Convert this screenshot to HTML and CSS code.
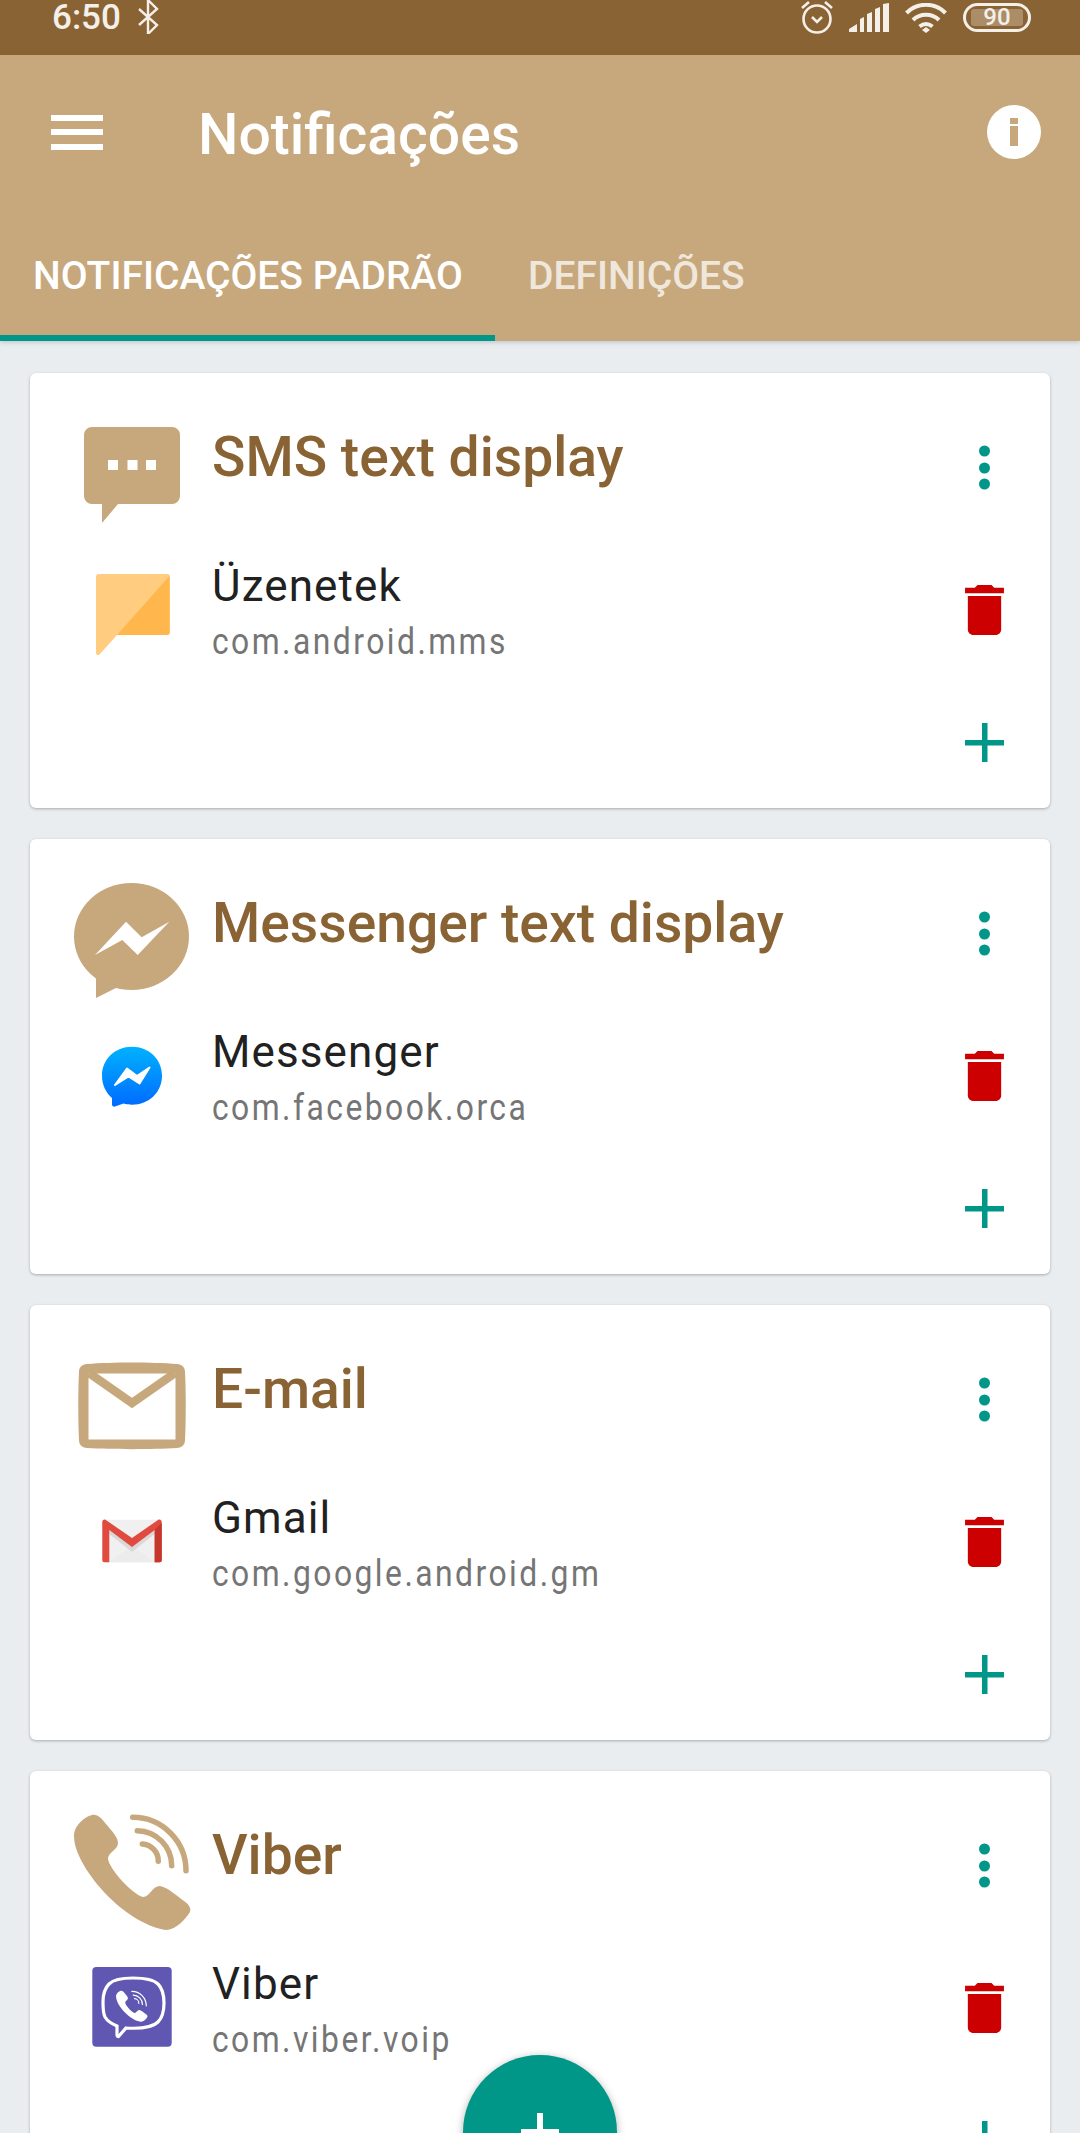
FILE: index.html
```html
<!DOCTYPE html>
<html lang="pt">
<head>
<meta charset="utf-8">
<title>Notificações</title>
<link rel="stylesheet" href="styles.css">
</head>
<body>
<div class="page">
  <header class="appbar">
    <div class="status">
      <div class="status-left">
        <span class="clock">6:50</span>
        <svg class="bt" viewBox="0 0 22 34"><path d="M2 9l18 16-9 9V0l9 9L2 25" fill="none" stroke="#f4efe8" stroke-width="2.4"/></svg>
      </div>
      <div class="status-right">
        <svg class="st-alarm" viewBox="0 0 34 34"><circle cx="17" cy="19" r="13.5" fill="none" stroke="#f4efe8" stroke-width="2.6"/><path d="M12 17l5 5 5-5" fill="none" stroke="#f4efe8" stroke-width="2.6"/><path d="M2 8L9 2M32 8L25 2" stroke="#f4efe8" stroke-width="2.6"/></svg>
        <svg class="st-signal" viewBox="0 0 40 29" fill="#f4efe8"><path d="M0 29v-3l8-5v8zM11 29V16l4-2v15zM18 29V11l5-2v20zM26 29V6l5-2v25zM34 29V1l6-1v29z"/></svg>
        <svg class="st-wifi" viewBox="0 0 42 30" fill="none" stroke="#f4efe8" stroke-width="4"><path d="M1.500 10C12-1 30-1 40.500 10M8 17c7-7 19-7 26 0M14.500 23.500c4-3 9-3 13 0"/><path d="M17 27l4-3 4 3-4 3z" fill="#f4efe8" stroke="none"/></svg>
        <div class="battery"><span class="battery-fill">90</span></div>
      </div>
    </div>
    <div class="toolbar">
      <div class="burger"><i></i><i></i><i></i></div>
      <h1 class="title">Notificações</h1>
      <svg class="info" viewBox="0 0 54 54"><circle cx="27" cy="27" r="27" fill="#fff"/><rect x="23" y="13" width="8" height="6" fill="#c7a87d"/><rect x="23" y="21" width="8" height="20" fill="#c7a87d"/></svg>
    </div>
    <nav class="tabs">
      <div class="tab tab-active">NOTIFICAÇÕES PADRÃO</div>
      <div class="tab tab-idle">DEFINIÇÕES</div>
    </nav>
  </header>

  <main class="list">
    <section class="card">
      <div class="row-head">
        <svg class="icon-big" viewBox="0 0 120 120"><path d="M20 13h80a8 8 0 0 1 8 8v61a8 8 0 0 1-8 8H46l-16 19V90H20a8 8 0 0 1-8-8V21a8 8 0 0 1 8-8z" fill="#c7a87d"/><path d="M36 46h10v10H36zM55.500 46h10v10h-10zM74 46h10v10H74z" fill="#fff"/></svg>
        <h2 class="card-title">SMS text display</h2>
        <svg class="kebab" viewBox="0 0 39 50" fill="#009688"><circle cx="19.500" cy="8" r="5.500"/><circle cx="19.500" cy="25" r="5.500"/><circle cx="19.500" cy="41" r="5.500"/></svg>
      </div>
      <div class="row-app">
        <div class="app-slot"><svg class="icon-app" viewBox="0 0 100 100"><path d="M17 14h68a3 3 0 0 1 3 3v55a3 3 0 0 1-3 3H35L17 95h-1a2 2 0 0 1-2-2V17a3 3 0 0 1 3-3z" fill="#ffcc80"/><path d="M87.500 16v56a3 3 0 0 1-3 3H35z" fill="#ffb74d"/></svg></div>
        <div class="app-text"><div class="app-name">Üzenetek</div><div class="app-pkg">com.android.mms</div></div>
        <svg class="trash" viewBox="5 3 14 18"><path d="M6 19c0 1.100.9 2 2 2h8c1.100 0 2-.9 2-2V7H6v12zM19 4h-3.500l-1-1h-5l-1 1H5v2h14V4z" fill="#cc0000"/></svg>
      </div>
      <div class="row-add"><svg class="plus" viewBox="0 0 39 39" fill="#009688"><path d="M17 0h5.500v39H17zM0 17h39v5.500H0z"/></svg></div>
    </section>

    <section class="card">
      <div class="row-head">
        <svg class="icon-big" viewBox="0 0 120 120"><ellipse cx="59.500" cy="56.500" rx="57.500" ry="53.500" fill="#c7a87d"/><path d="M24 90v28l22-11z" fill="#c7a87d"/><path d="M23 75L54 41.700 69.700 57.300 97.300 41.700 65.700 75 50.300 60z" fill="#fff"/></svg>
        <h2 class="card-title">Messenger text display</h2>
        <svg class="kebab" viewBox="0 0 39 50" fill="#009688"><circle cx="19.500" cy="8" r="5.500"/><circle cx="19.500" cy="25" r="5.500"/><circle cx="19.500" cy="41" r="5.500"/></svg>
      </div>
      <div class="row-app">
        <div class="app-slot"><svg class="icon-app" viewBox="0 0 100 100"><defs><linearGradient id="mg" x1="0" y1="0" x2="0" y2="1"><stop offset="0" stop-color="#00b2ff"/><stop offset="1" stop-color="#006aff"/></linearGradient></defs><path d="M50 20.700c17 0 30 12.600 30 29 0 16.400-13 29-30 29-3 0-6-.4-8.500-1.200L33 80.500c-1.500.5-3-.5-3-2V72C24 66.700 20 59 20 49.700c0-16.400 13-29 30-29z" fill="url(#mg)"/><path d="M33 59L45 42.500 55 50 67.500 41.500 57.500 57.500 46.500 50.500z" fill="#fff" stroke="#fff" stroke-width="2" stroke-linejoin="round"/></svg></div>
        <div class="app-text"><div class="app-name">Messenger</div><div class="app-pkg">com.facebook.orca</div></div>
        <svg class="trash" viewBox="5 3 14 18"><path d="M6 19c0 1.100.9 2 2 2h8c1.100 0 2-.9 2-2V7H6v12zM19 4h-3.500l-1-1h-5l-1 1H5v2h14V4z" fill="#cc0000"/></svg>
      </div>
      <div class="row-add"><svg class="plus" viewBox="0 0 39 39" fill="#009688"><path d="M17 0h5.500v39H17zM0 17h39v5.500H0z"/></svg></div>
    </section>

    <section class="card">
      <div class="row-head">
        <svg class="icon-big" viewBox="0 0 120 120"><path fill-rule="evenodd" d="M15 18C40 16 80 16 105 18c5 .4 8 3 8 8 1 20 1 48 0 68 0 5-3 7.600-8 8-25 1.500-65 1.500-90 0-5-.4-8-3-8-8C6 74 6 46 7 26c0-5 3-7.600 8-8zM16.500 27.500v66h87v-66z" fill="#c7a87d"/><path d="M17 27l43 30 43-30" fill="none" stroke="#c7a87d" stroke-width="8.500"/></svg>
        <h2 class="card-title">E-mail</h2>
        <svg class="kebab" viewBox="0 0 39 50" fill="#009688"><circle cx="19.500" cy="8" r="5.500"/><circle cx="19.500" cy="25" r="5.500"/><circle cx="19.500" cy="41" r="5.500"/></svg>
      </div>
      <div class="row-app">
        <div class="app-slot"><svg class="icon-app" viewBox="0 0 100 100"><path d="M22 27.700h56a2 2 0 0 1 2 2v38.600a2 2 0 0 1-2 2H22a2 2 0 0 1-2-2V29.700a2 2 0 0 1 2-2z" fill="#f0f0f0"/><path d="M27.300 70.300L50 54 72.700 70.300z" fill="#ececec"/><path d="M27.300 37L50 54l22.700-17v5L50 60 27.300 42z" fill="#d9d9d9"/><path d="M20.300 68.300V30c0-2 2-3 3.500-2L50 46 76 28c1.500-1 3.700 0 3.700 2v38.300a2 2 0 0 1-2 2h-5V38L50 55 27.300 38v32.300h-5a2 2 0 0 1-2-2z" fill="#e04a3f"/><path d="M72.700 38l7-7v37.300a2 2 0 0 1-2 2h-5z" fill="#c5372c"/></svg></div>
        <div class="app-text"><div class="app-name">Gmail</div><div class="app-pkg">com.google.android.gm</div></div>
        <svg class="trash" viewBox="5 3 14 18"><path d="M6 19c0 1.100.9 2 2 2h8c1.100 0 2-.9 2-2V7H6v12zM19 4h-3.500l-1-1h-5l-1 1H5v2h14V4z" fill="#cc0000"/></svg>
      </div>
      <div class="row-add"><svg class="plus" viewBox="0 0 39 39" fill="#009688"><path d="M17 0h5.500v39H17zM0 17h39v5.500H0z"/></svg></div>
    </section>

    <section class="card">
      <div class="row-head">
        <svg class="icon-big" viewBox="0 0 120 120"><path d="M2 24C2 14 12 5 20 3c6-1 10 4 14 9 5 6 12 13 12 19 0 7-10 9-10 16 2 11 24 35 35 38 7 0 9-11 17-11 7 1 16 9 24 15 6 4 7 8 6 11-5 8-14 17-23 18-15-1-37-13-55-30C22 71 2 44 2 24z" fill="#c7a87d"/><path d="M60.700 5.300A53.400 53.400 0 0 1 114 58.700M65.300 18.700A35 35 0 0 1 99.700 53.700M70.300 32A17 17 0 0 1 86.300 49.300" fill="none" stroke="#c7a87d" stroke-width="5.500" stroke-linecap="round"/></svg>
        <h2 class="card-title">Viber</h2>
        <svg class="kebab" viewBox="0 0 39 50" fill="#009688"><circle cx="19.500" cy="8" r="5.500"/><circle cx="19.500" cy="25" r="5.500"/><circle cx="19.500" cy="41" r="5.500"/></svg>
      </div>
      <div class="row-app">
        <div class="app-slot"><svg class="icon-app" viewBox="0 0 100 100"><rect x="10.300" y="9" width="79.400" height="79.700" rx="4" fill="#5f57b2"/><path d="M51 20c10 0 20 1 25 6s6 12 6 19-1 14-6 19-16 7-32 6l-7 8c-1 1-2 .5-2-1v-9c-5-2-9-4-12-9-2-4-2-10-2-15 0-6 1-13 6-18s15-6 24-6z" fill="none" stroke="#fff" stroke-width="3.200"/><g transform="translate(33.500 32) scale(.27)"><path d="M2 24C2 14 12 5 20 3c6-1 10 4 14 9 5 6 12 13 12 19 0 7-10 9-10 16 2 11 24 35 35 38 7 0 9-11 17-11 7 1 16 9 24 15 6 4 7 8 6 11-5 8-14 17-23 18-15-1-37-13-55-30C22 71 2 44 2 24z" fill="#fff"/><path d="M60.700 5.300A53.400 53.400 0 0 1 114 58.700M65.300 18.700A35 35 0 0 1 99.700 53.700M70.300 32A17 17 0 0 1 86.300 49.300" fill="none" stroke="#fff" stroke-width="4.500" stroke-linecap="round"/></g></svg></div>
        <div class="app-text"><div class="app-name">Viber</div><div class="app-pkg">com.viber.voip</div></div>
        <svg class="trash" viewBox="5 3 14 18"><path d="M6 19c0 1.100.9 2 2 2h8c1.100 0 2-.9 2-2V7H6v12zM19 4h-3.500l-1-1h-5l-1 1H5v2h14V4z" fill="#cc0000"/></svg>
      </div>
      <div class="row-add"><svg class="plus" viewBox="0 0 39 39" fill="#009688"><path d="M17 0h5.500v39H17zM0 17h39v5.500H0z"/></svg></div>
    </section>
  </main>

  <button class="fab" type="button" aria-label="Adicionar"><svg class="fab-plus" viewBox="0 0 38 38" fill="#fff"><path d="M16 0h6v38h-6zM0 16h38v6H0z"/></svg></button>
</div>
</body>
</html>
```

FILE: styles.css
```css
* { box-sizing: border-box; }
html, body { margin: 0; padding: 0; height: 2133px; overflow: hidden; }
body { font-family: Roboto, "Liberation Sans", sans-serif; background: #e9edf0; }
.page { position: relative; width: 1080px; height: 2133px; overflow: hidden; display: flex; flex-direction: column; }

.appbar { background: #c7a87d; color: #fff; box-shadow: 0 2px 4px rgba(0,0,0,.14); position: relative; z-index: 1; flex: none; }

.status { height: 55px; background: #8a6334; display: flex; justify-content: space-between; align-items: flex-start; padding: 0 49px 0 52px; }
.status-left { display: flex; align-items: flex-start; }
.clock { font-size: 35px; line-height: 36px; font-weight: 500; color: #f4efe8; }
.bt { width: 24px; height: 34px; margin-left: 15px; }
.status-right { display: flex; align-items: flex-start; padding-top: 3px; }
.st-alarm { width: 34px; height: 34px; margin-top: -3px; }
.st-signal { width: 40px; height: 29px; margin-left: 15px; }
.st-wifi { width: 42px; height: 30px; margin-left: 16px; }
.battery { width: 68px; height: 29px; margin-left: 16px; border: 3px solid #f4efe8; border-radius: 15px; padding: 3px 5px; }
.battery-fill { display: block; width: 52px; height: 17px; background: #ab8d68; border-radius: 3px; font-size: 24px; line-height: 17px; font-weight: 500; color: #f4efe8; text-align: center; }

.toolbar { height: 154px; display: flex; align-items: center; padding: 0 39px 0 51px; }
.burger { width: 52px; height: 35px; display: flex; flex-direction: column; justify-content: space-between; margin-right: 95px; }
.burger i { display: block; height: 6px; background: #fff; }
.title { margin: 0; flex: 1; font-size: 57px; line-height: 64px; font-weight: 500; padding-top: 6px; }
.info { width: 54px; height: 54px; }

.tabs { height: 132px; display: flex; }
.tab { height: 132px; padding: 0 33px; font-size: 39px; line-height: 134px; font-weight: 500; }
.tab-active { width: 495px; border-bottom: 6px solid #009688; white-space: nowrap; }
.tab-idle { color: #efe7dc; }

.list { padding: 32px 30px 0; display: flex; flex-direction: column; gap: 31px; flex: none; }
.card { height: 435px; flex: none; background: #fff; border-radius: 6px; box-shadow: 0 1px 3px rgba(0,0,0,.28); padding: 41px 46px 0 42px; }

.row-head { height: 120px; display: flex; align-items: flex-start; }
.icon-big { width: 120px; height: 120px; flex: none; display: block; }
.card-title { margin: 0 0 0 20px; flex: 1; color: #8a6334; font-size: 55.200px; line-height: 64px; font-weight: 500; padding-top: 11px; }
.kebab { width: 39px; height: 50px; flex: none; margin-top: 29px; }

.row-app { height: 152px; display: flex; align-items: center; }
.app-slot { width: 120px; flex: none; display: flex; justify-content: center; }
.icon-app { width: 100px; height: 100px; display: block; }
.app-text { margin-left: 20px; flex: 1; padding-top: 8px; }
.app-name { font-size: 44px; line-height: 52px; color: #212121; letter-spacing: 1.100px; }
.app-pkg { font-size: 37px; line-height: 52px; color: #757575; letter-spacing: 2.870px; margin-top: 4px; transform: scaleX(.86); transform-origin: 0 50%; white-space: nowrap; }
.trash { width: 39px; height: 50px; flex: none; }

.row-add { display: flex; justify-content: flex-end; padding-top: 37px; }
.plus { width: 39px; height: 39px; display: block; }

.fab { position: absolute; left: 463px; top: 2055px; width: 154px; height: 154px; border: 0; padding: 0; border-radius: 50%; background: #009688; box-shadow: 0 2px 8px rgba(0,0,0,.3); z-index: 2; display: flex; align-items: center; justify-content: center; }
.fab-plus { width: 38px; height: 38px; }
```
